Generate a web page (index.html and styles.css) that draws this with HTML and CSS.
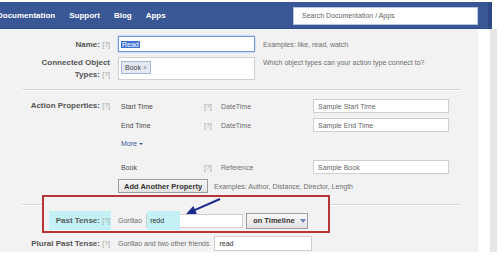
FILE: index.html
```html
<!DOCTYPE html>
<html lang="en">
<head>
    <meta charset="UTF-8">
    <title>Open Graph Action Type</title>
    <link rel="stylesheet" href="styles.css">
</head>
<body>

<div class="topbar">
    <nav class="nav">
        <a href="#">Documentation</a>
        <a href="#">Support</a>
        <a href="#">Blog</a>
        <a href="#">Apps</a>
    </nav>
    <div class="search">Search Documentation / Apps</div>
</div>

<div class="page">
    <div class="panel">

        <div class="row name-row">
            <div class="label">Name: <span class="help">[?]</span></div>
            <div class="field name-field"><span class="sel">Read</span></div>
            <div class="hint">Examples: like, read, watch</div>
        </div>

        <div class="row types-row">
            <div class="label">Connected Object<br>Types: <span class="help">[?]</span></div>
            <div class="field types-field"><span class="token">Book <span class="x">×</span></span></div>
            <div class="hint">Which object types can your action type connect to?</div>
        </div>

        <div class="sep"></div>

        <div class="row props-row">
            <div class="label">Action Properties: <span class="help">[?]</span></div>
            <div class="props">
                <div class="prop">
                    <span class="pname">Start Time</span>
                    <span class="phelp">[?]</span>
                    <span class="ptype">DateTime</span>
                    <input class="pinput" type="text" placeholder="Sample Start Time">
                </div>
                <div class="prop">
                    <span class="pname">End Time</span>
                    <span class="phelp">[?]</span>
                    <span class="ptype">DateTime</span>
                    <input class="pinput" type="text" placeholder="Sample End Time">
                </div>
                <a class="more" href="#">More<span class="caret"></span></a>
                <div class="prop book">
                    <span class="pname">Book</span>
                    <span class="phelp">[?]</span>
                    <span class="ptype">Reference</span>
                    <input class="pinput" type="text" placeholder="Sample Book">
                </div>
                <div class="add-line">
                    <button class="btn">Add Another Property</button>
                    <span class="hint">Examples: Author, Distance, Director, Length</span>
                </div>
            </div>
        </div>

        <div class="sep sep-low"></div>

        <div class="callout"></div>
        <svg class="arrow" width="45" height="25" viewBox="0 0 45 25">
            <line x1="40" y1="5" x2="14" y2="16.4" stroke="#1f2b8c" stroke-width="2"/>
            <polygon points="6,20 13.3,11.9 16.9,20.1" fill="#1f2b8c"/>
        </svg>

        <div class="row past-row">
            <div class="label"><span class="hl">Past Tense: <span class="help">[?]</span></span></div>
            <span class="actor">Gorillao</span>
            <div class="field past-field"><span class="mark">redd</span></div>
            <button class="btn timeline">on Timeline<span class="drop"></span></button>
        </div>

        <div class="row plural-row">
            <div class="label">Plural Past Tense: <span class="help">[?]</span></div>
            <span class="actor">Gorillao and two other friends</span>
            <input class="pinput plural-input" type="text" value="read">
        </div>

    </div>
    <div class="gutter"></div>
</div>

</body>
</html>
```

FILE: styles.css
```css
body {
    margin: 0;
    width: 500px;
    height: 255px;
    overflow: hidden;
    background: #fff;
    font-family: "Liberation Sans", Arial, sans-serif;
    font-size: 7px;
    color: #555;
}

/* top bar */
.topbar {
    box-sizing: border-box;
    margin-top: 2px;
    width: 492px;
    height: 27px;
    display: flex;
    align-items: center;
    background: #3a5795;
    border-right: 4px solid #2e4a85;
    border-bottom: 1px solid #304c88;
}
.nav {
    display: flex;
    gap: 14px;
    margin-left: -3px;
    margin-top: 1px;
}
.nav a {
    color: #fff;
    font-weight: bold;
    font-size: 8px;
    text-decoration: none;
}
.search {
    box-sizing: border-box;
    margin-left: auto;
    margin-right: 10px;
    margin-top: 1px;
    width: 185px;
    height: 18px;
    padding-left: 8px;
    line-height: 16px;
    background: #fff;
    border: 1px solid #b9c6e0;
    color: #666;
}

/* page */
.page {
    display: flex;
    height: 223px;
}
.panel {
    position: relative;
    width: 478px;
    background: #f2f2f2;
}
.gutter {
    width: 7px;
    margin-left: 12px;
    background: #e6e6e6;
}

/* rows */
.row {
    display: flex;
    align-items: center;
}
.label {
    flex: none;
    width: 110px;
    margin-right: 8px;
    text-align: right;
    font-weight: bold;
    font-size: 8px;
    color: #555;
}
.help {
    font-weight: normal;
    font-size: 7px;
    color: #a3a3a3;
}
.hint {
    margin-left: 8px;
    color: #6e6e6e;
}
.field {
    box-sizing: border-box;
    background: #fff;
    border: 1px solid #cfcfcf;
}

.name-row {
    margin-top: 7px;
    height: 16px;
}
.name-field {
    display: flex;
    align-items: center;
    width: 137px;
    height: 16px;
    padding-left: 2px;
    border-color: #7396d8;
    box-shadow: 0 0 2px #9fb8ea;
}
.sel {
    background: #3d72d4;
    color: #fff;
    padding: 0 1px;
}

.types-row {
    margin-top: 5px;
    align-items: flex-start;
}
.types-row .label,
.types-row .hint {
    line-height: 12px;
}
.types-field {
    width: 137px;
    height: 23px;
    padding: 3px 0 0 2px;
}
.token {
    display: inline-flex;
    align-items: center;
    box-sizing: border-box;
    height: 13px;
    padding: 0 3px;
    background: #e3e8f2;
    border: 1px solid #a9b6d2;
    color: #444;
}
.token .x {
    margin-left: 2px;
    color: #8a8a8a;
}

.sep {
    margin: 8px 18px 0 22px;
    border-top: 1px solid #d6d6d6;
    border-bottom: 1px solid #fff;
}
.sep-low {
    margin-top: 11px;
}

/* action properties */
.props-row {
    margin-top: 8px;
    align-items: flex-start;
}
.props-row .label {
    line-height: 14px;
}
.prop {
    display: flex;
    align-items: center;
    height: 14px;
}
.prop + .prop {
    margin-top: 5px;
}
.pname {
    width: 83px;
    padding-left: 3px;
    color: #4a4a4a;
}
.phelp {
    width: 17px;
    color: #a3a3a3;
}
.ptype {
    width: 92px;
    color: #6e6e6e;
}
.pinput {
    box-sizing: border-box;
    width: 136px;
    height: 14px;
    margin: 0;
    padding: 0 0 0 4px;
    background: #fff;
    border: 1px solid #cfcfcf;
    font-family: inherit;
    font-size: 7px;
    color: #333;
    outline: none;
}
.pinput::placeholder {
    color: #666;
}
.more {
    display: block;
    margin: 6px 0 0 3px;
    line-height: 12px;
    color: #3b5998;
    text-decoration: none;
}
.caret {
    display: inline-block;
    margin-left: 2px;
    vertical-align: middle;
    border-left: 2px solid transparent;
    border-right: 2px solid transparent;
    border-top: 2px solid #3b5998;
}
.prop.book {
    margin-top: 10px;
}
.add-line {
    display: flex;
    align-items: center;
    margin-top: 5px;
}
.add-line .hint {
    margin-left: 6px;
}
.btn {
    box-sizing: border-box;
    height: 14px;
    margin: 0;
    padding: 0 5px;
    background: linear-gradient(#f8f8f8, #e2e2e2);
    border: 1px solid #9c9c9c;
    font-family: inherit;
    font-weight: bold;
    font-size: 7.5px;
    color: #333;
}

/* annotation */
.callout {
    position: absolute;
    left: 42px;
    top: 166px;
    box-sizing: border-box;
    width: 288px;
    height: 38px;
    background: #f2f2f2;
    border: 2px solid #b53636;
}
.arrow {
    position: absolute;
    left: 180px;
    top: 165px;
    z-index: 2;
}

.past-row {
    position: relative;
    margin-top: 5px;
    height: 19px;
}
.hl {
    display: inline-block;
    height: 19px;
    line-height: 19px;
    padding: 0 1px 0 7px;
    margin-right: -1px;
    background: #c3f1f6;
    color: #5a5a5a;
}
.actor {
    color: #6e6e6e;
}
.past-row .actor {
    margin-right: 4px;
}
.past-field {
    display: flex;
    align-items: center;
    width: 97px;
    height: 14px;
}
.mark {
    flex: none;
    box-sizing: border-box;
    width: 33px;
    height: 19px;
    line-height: 19px;
    padding-left: 3px;
    background: #c3f1f6;
    color: #333;
}
.timeline {
    display: flex;
    align-items: center;
    height: 16px;
    width: 62px;
    margin-left: 3px;
    padding: 0 0 0 6px;
}
.drop {
    margin-left: 5px;
    border-left: 3px solid transparent;
    border-right: 3px solid transparent;
    border-top: 4px solid #7186b8;
}

.plural-row {
    margin-top: 6px;
    height: 15px;
}
.plural-row .actor {
    margin-right: 5px;
}
.plural-input {
    width: 98px;
    height: 15px;
}
```
